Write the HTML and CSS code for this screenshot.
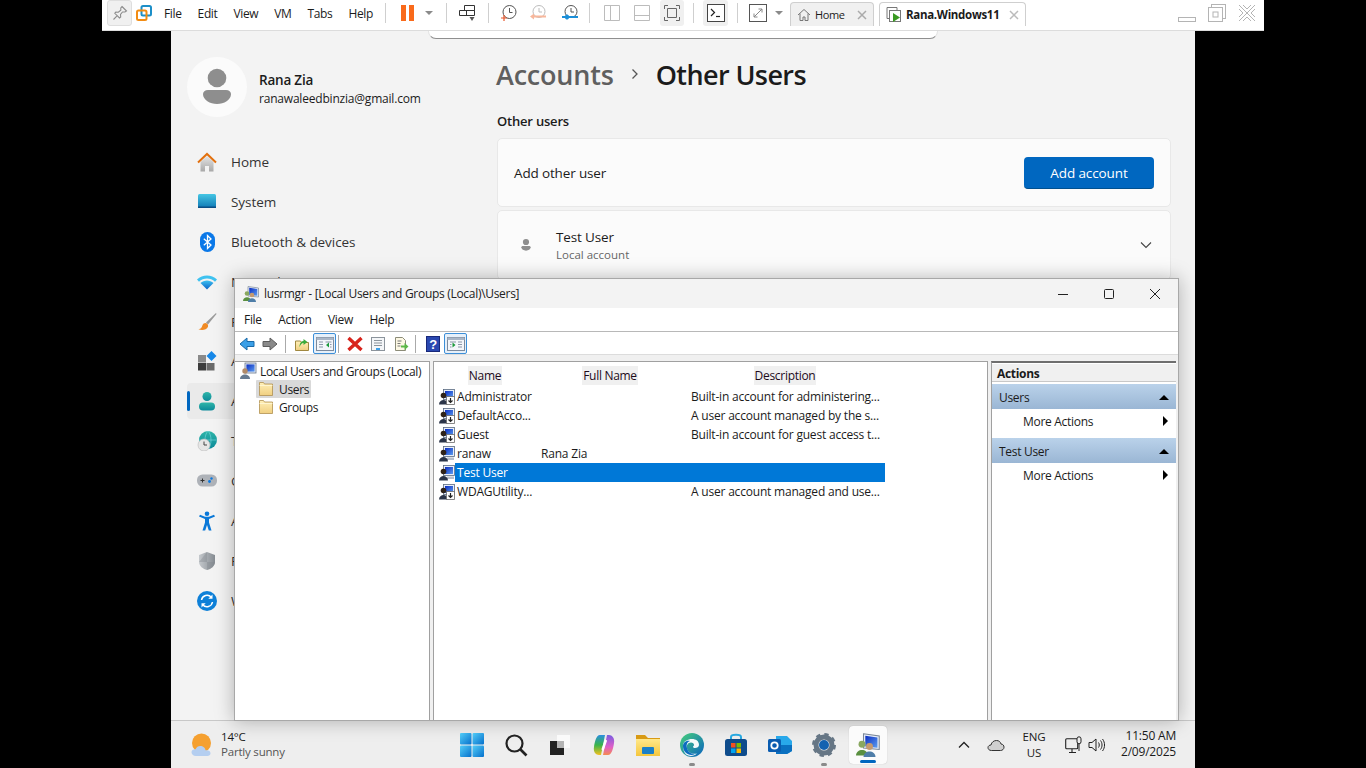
FILE: index.html
```html
<!DOCTYPE html>
<html lang="en">
<head>
    <meta charset="UTF-8">
    <meta name="viewport" content="width=device-width, initial-scale=1.0">
    <title>Rana.Windows11</title>
    <link rel="stylesheet" href="styles.css">
</head>
<body>
    <svg class="defs" aria-hidden="true">
        <defs>
            <linearGradient id="g-house" x1="0" y1="0" x2="0" y2="1"><stop offset="0" stop-color="#e4e4e4"/><stop offset="1" stop-color="#a8a8a8"/></linearGradient>
            <linearGradient id="g-screen" x1="0" y1="0" x2="0" y2="1"><stop offset="0" stop-color="#45c6e4"/><stop offset="1" stop-color="#0f78b4"/></linearGradient>
            <linearGradient id="g-wifi" x1="0" y1="0" x2="0" y2="1"><stop offset="0" stop-color="#3fc2f0"/><stop offset="1" stop-color="#0a62c8"/></linearGradient>
            <linearGradient id="g-teal" x1="0" y1="0" x2="0" y2="1"><stop offset="0" stop-color="#2fb5a8"/><stop offset="1" stop-color="#0b8a9a"/></linearGradient>
            <linearGradient id="g-shield" x1="0" y1="0" x2="1" y2="0"><stop offset="0" stop-color="#c4c8cc"/><stop offset="1" stop-color="#868c92"/></linearGradient>
            <linearGradient id="g-start" x1="0" y1="0" x2="1" y2="1"><stop offset="0" stop-color="#52cdf8"/><stop offset="1" stop-color="#0670cc"/></linearGradient>
            <linearGradient id="g-folder" x1="0" y1="0" x2="0" y2="1"><stop offset="0" stop-color="#ffe88a"/><stop offset="1" stop-color="#f5c63c"/></linearGradient>
            <linearGradient id="g-tree" x1="0" y1="0" x2="0" y2="1"><stop offset="0" stop-color="#fff0b8"/><stop offset="1" stop-color="#f0cf80"/></linearGradient>
            <linearGradient id="g-edge" x1="0" y1="0" x2="1" y2="1"><stop offset="0" stop-color="#46d07a"/><stop offset="1" stop-color="#0a62c0"/></linearGradient>
            <linearGradient id="g-copl" x1="0" y1="0" x2="0" y2="1"><stop offset="0" stop-color="#2a8ee0"/><stop offset=".5" stop-color="#38b44a"/><stop offset="1" stop-color="#f5c020"/></linearGradient>
            <linearGradient id="g-copr" x1="0" y1="0" x2="0" y2="1"><stop offset="0" stop-color="#7a5ce0"/><stop offset=".6" stop-color="#e060c8"/><stop offset="1" stop-color="#f58a50"/></linearGradient>
            <linearGradient id="g-mon" x1="0" y1="0" x2="1" y2="1"><stop offset="0" stop-color="#0a2cc0"/><stop offset="1" stop-color="#5c9cf0"/></linearGradient>

            <symbol id="i-home" viewBox="0 0 20 20"><path d="M3.500 10 10 4l6.500 6v9.500H12V14H8v5.500H3.500z" fill="url(#g-house)"/><path d="M1 10.500 10 2l9 8.500" fill="none" stroke="#e2700e" stroke-width="2"/></symbol>
            <symbol id="i-system" viewBox="0 0 20 20"><rect x="1" y="2" width="18" height="14" rx="1.500" fill="url(#g-screen)"/><rect x="1" y="14.500" width="18" height="1.500" fill="#0b4f86"/></symbol>
            <symbol id="i-bt" viewBox="0 0 20 20"><rect x="3" y="0" width="15" height="20" rx="7.500" fill="#0a78e8"/><path d="M6.800 6.800 14 13l-3.500 3.500v-13L14 7l-7.200 6.200" fill="none" stroke="#fff" stroke-width="1.300"/></symbol>
            <symbol id="i-wifi" viewBox="0 0 20 20"><path d="M0 7.500C5.500 2 14.500 2 20 7.500l-2 2.200C13.500 5.300 6.500 5.300 2 9.700z" fill="#3fc2f0"/><path d="M3.500 11C7 7.500 13 7.500 16.500 11L10 17.500z" fill="url(#g-wifi)"/></symbol>
            <symbol id="i-brush" viewBox="0 0 20 20"><path d="M19 1 9 10.500l2 2L19.500 2z" fill="#9a9a9a"/><path d="M8.500 11c-3 0-3 3-4 4.500-.7 1-2 1.500-3 1.800 3 1.500 8 1 9.500-2.500.5-1.500-.5-3.800-2.500-3.800z" fill="#f08a24"/></symbol>
            <symbol id="i-apps" viewBox="0 0 20 20"><rect x="1" y="4" width="8" height="7.500" fill="#8a8a8a"/><rect x="1" y="12" width="8" height="7.500" fill="#3c3c3c"/><rect x="9.500" y="12" width="8" height="7.500" fill="#6a6a6a"/><path d="m14.500 0 5 5-5 5-5-5z" fill="#1788e8"/></symbol>
            <symbol id="i-person" viewBox="0 0 20 20"><circle cx="10" cy="5.500" r="4.500" fill="url(#g-teal)"/><rect x="2" y="11.500" width="16" height="8" rx="4" fill="url(#g-teal)"/></symbol>
            <symbol id="i-time" viewBox="0 0 20 20"><circle cx="11" cy="9" r="9" fill="url(#g-teal)"/><path d="M2 9h18M11 0c-4 4-4 14 0 18M11 0c4 4 4 14 0 18" stroke="#7cd8e0" stroke-width=".6" fill="none"/><circle cx="7" cy="14" r="6" fill="#e6e6e6" stroke="#b8b8b8" stroke-width=".6"/><path d="M7 10.500V14h3" fill="none" stroke="#444" stroke-width="1"/></symbol>
            <symbol id="i-game" viewBox="0 0 20 20"><rect x="0" y="3.500" width="20" height="12" rx="5.500" fill="#aeb2b8"/><path d="M3.500 9.500h4M5.500 7.500v4" stroke="#333" stroke-width="1"/><circle cx="14.500" cy="7.500" r="1.200" fill="#0a78e0"/><circle cx="12.500" cy="10.500" r="1.400" fill="#0a78e0"/></symbol>
            <symbol id="i-access" viewBox="0 0 20 20"><circle cx="10" cy="2.800" r="2.300" fill="#0a78d8"/><path d="M2 5.500 8 8v3.500L5.500 19.500h2.700L10 14l1.800 5.500h2.700L12 11.500V8l6-2.500-1-1.800-5 2h-4l-5-2z" fill="#0a78d8"/></symbol>
            <symbol id="i-shield" viewBox="0 0 20 20"><path d="M10 1 2 4v7c0 4 4 7 8 8 4-1 8-4 8-8V4z" fill="url(#g-shield)"/><path d="M10 1v18c4-1 8-4 8-8H2v0" fill="#7d848a" opacity=".35"/></symbol>
            <symbol id="i-update" viewBox="0 0 20 20"><circle cx="10" cy="10" r="10" fill="#0e80d8"/><path d="M4.500 9A5.600 5.600 0 0 1 14.300 6.300M15.500 11A5.600 5.600 0 0 1 5.700 13.700" fill="none" stroke="#fff" stroke-width="1.500"/><path d="M15.500 3.500v4.200h-4.200zM4.500 16.500v-4.200h4.200z" fill="#fff"/></symbol>
            <symbol id="i-avatar" viewBox="0 0 60 60"><circle cx="30" cy="21" r="9.300" fill="#8e8e8e"/><path d="M21 33h18c3 0 5 2 5 4 0 6-7 10-14 10s-14-4-14-10c0-2 2-4 5-4z" fill="#8e8e8e"/></symbol>

            <symbol id="i-mmc" viewBox="0 0 16 16"><path d="M5 .5 15.500 2v9L5 10z" fill="#e6edf8" stroke="#7a8798" stroke-width=".7"/><path d="M6.200 1.800 14.300 3v6.800L6.200 9z" fill="url(#g-mon)"/><circle cx="4" cy="7.500" r="2.300" fill="#8aa860"/><path d="M0 15c0-5 8-5 8 0z" fill="#5a9040"/><circle cx="9" cy="9" r="2.300" fill="#c49a70"/><path d="M5 16c0-5 8-5 8 0z" fill="#4f7ea8"/></symbol>
            <symbol id="i-root" viewBox="0 0 18 18"><rect x="6" y="1" width="11" height="10" fill="#e6edf8" stroke="#66758a" stroke-width=".8"/><rect x="7.400" y="2.400" width="8.200" height="7.200" fill="url(#g-mon)"/><circle cx="6" cy="9" r="2.700" fill="#b08a68"/><path d="M1 17c0-6 10-6 10 0z" fill="#667a90"/></symbol>
            <symbol id="i-user" viewBox="0 0 16 16"><rect x="4.500" y="0.500" width="11" height="10" fill="#e8eef8" stroke="#5a6a80" stroke-width=".8"/><rect x="6" y="2" width="8" height="7" fill="url(#g-mon)"/><rect x="8" y="11.500" width="7" height="2.500" fill="#b8c0cc"/><circle cx="4.500" cy="6.500" r="2.800" fill="#2e2218"/><path d="M0 15.500c0-6 9-6 9 0z" fill="#2a3448"/></symbol>
            <symbol id="i-user-off" viewBox="0 0 16 16"><use href="#i-user"/><rect x="7.500" y="7.500" width="8" height="8" fill="#fff" stroke="#6a6a6a" stroke-width=".8"/><path d="M11.500 9v3.500M9.500 11.500l2 2 2-2" fill="none" stroke="#222" stroke-width="1.200"/></symbol>
            <symbol id="i-folder" viewBox="0 0 16 16"><path d="M1.500 1.500h4l1 1.500h8v11.500h-13z" fill="url(#g-tree)" stroke="#b09050" stroke-width=".8"/><path d="M1.500 4.500h13" stroke="#fff8d8" stroke-width=".8"/></symbol>
            <symbol id="i-pane-l" viewBox="0 0 22 20"><rect x="2.500" y="3.500" width="17" height="13" fill="#f4f6fa" stroke="#7c8a9c"/><rect x="2.500" y="3.500" width="17" height="2.500" fill="#aab6c6"/><path d="M5 8h4M5 10.500h4M5 13h4" stroke="#8a96a8"/><path d="M11.500 8h6M16 10.500h1.500M16 13h1.500" stroke="#8a96a8"/><path d="m15 8.500-3 2.500 3 2.500z" fill="#1c9a3c"/></symbol>
            <symbol id="i-pane-r" viewBox="0 0 22 20"><rect x="2.500" y="3.500" width="17" height="13" fill="#f4f6fa" stroke="#7c8a9c"/><rect x="2.500" y="3.500" width="17" height="2.500" fill="#aab6c6"/><path d="M13 8h4M13 10.500h4M13 13h4" stroke="#8a96a8"/><path d="M5 8h6M5 10.500h1.500M5 13h1.500" stroke="#8a96a8"/><path d="m7.500 8.500 3 2.500-3 2.500z" fill="#1c9a3c"/></symbol>
        </defs>
    </svg>

    <!-- barra de VMware -->
    <header class="vm-bar">
        <button class="vm-pin">
            <svg class="i16" viewBox="0 0 16 16"><path d="M10 1.500 14.500 6 13 7l-2.500 0-2 2.500.2 2.500-1.200 1L2.800 8.300l1-1.200 2.500.2 2.500-2V3z" fill="none" stroke="#8c8c8c" stroke-width="1.100"/><path d="M4.800 11.200 1.500 14.500" stroke="#8c8c8c" stroke-width="1.100"/></svg>
        </button>
        <svg class="i16 vm-logo" viewBox="0 0 16 16"><rect x="5.500" y="1" width="9.500" height="9.500" rx="1.500" fill="none" stroke="#1c8fc8" stroke-width="2"/><rect x="1" y="5.500" width="9.500" height="9.500" rx="1.500" fill="none" stroke="#f28c13" stroke-width="2"/></svg>
        <nav class="vm-menu"><span>File</span><span>Edit</span><span>View</span><span>VM</span><span>Tabs</span><span>Help</span></nav>
        <i class="vm-sep vm-sep-a"></i>
        <span class="vm-pause"><b></b><b></b></span>
        <i class="vm-caret vm-caret-a"></i>
        <i class="vm-sep vm-sep-b"></i>
        <svg class="i18 vm-keys" viewBox="0 0 18 18"><path d="M6.500 1.500h10v5h-10zM1.500 6.500h15v5h-15zM8.500 6.500v5" fill="#fff" stroke="#333"/><path d="m11.500 13 2.500 4 2.500-4z" fill="#555"/></svg>
        <i class="vm-sep vm-sep-b"></i>
        <svg class="i18 vm-snap-a" viewBox="0 0 18 18"><circle cx="9.500" cy="8" r="6.500" fill="none" stroke="#555"/><path d="M9.500 4v4.500h3" fill="none" stroke="#555"/><path d="M1 14h6M4 11v6" stroke="#e8562a" stroke-width="1.200"/></svg>
        <svg class="i18 vm-snap-b" viewBox="0 0 18 18"><circle cx="10" cy="7.500" r="6" fill="none" stroke="#bdbdbd"/><path d="M10 4v4h3" fill="none" stroke="#bdbdbd"/><path d="M5 11.500H17v2H5v2l-4-3 4-3z" fill="#f8b79c"/></svg>
        <svg class="i18 vm-snap-c" viewBox="0 0 18 18"><circle cx="10" cy="7.500" r="6" fill="none" stroke="#555"/><path d="M10 4v4h3" fill="none" stroke="#555"/><path d="M1 12h3c1-2 3-2 4 0h9v2H8c-1 2-3 2-4 0H1z" fill="#1c8fd8"/></svg>
        <i class="vm-sep vm-sep-c"></i>
        <svg class="i16 vm-lay-a" viewBox="0 0 16 16"><path d="M.5.500h15v15H.5zM6.500.500v15" fill="none" stroke="#bcbcbc"/></svg>
        <svg class="i16 vm-lay-b" viewBox="0 0 16 16"><path d="M.5.500h15v15H.5zM.5 10.500h15" fill="none" stroke="#bcbcbc"/></svg>
        <span class="vm-btn vm-full"><svg class="i16" viewBox="0 0 16 16"><path d="M3.500 3.500h9v9h-9z" fill="none" stroke="#666"/><path d="M.5 4V.500H4M12 .500h3.500V4M.5 12v3.500H4M12 15.500h3.500V12" fill="none" stroke="#666"/></svg></span>
        <i class="vm-sep vm-sep-d"></i>
        <span class="vm-btn vm-term"><svg class="i18" viewBox="0 0 18 18"><rect x=".5" y=".5" width="17" height="17" fill="#fff" stroke="#444"/><path d="m4 5 3.500 3.500L4 12" fill="none" stroke="#222" stroke-width="1.200"/><path d="M9 12.500h4" stroke="#222" stroke-width="1.200"/></svg></span>
        <i class="vm-sep vm-sep-d"></i>
        <svg class="i18 vm-expand" viewBox="0 0 18 18"><rect x=".5" y=".5" width="17" height="17" fill="#fff" stroke="#555"/><path d="m5 13 8-8M9.500 5H13v3.500M5 9.500V13h3.500" fill="none" stroke="#888"/></svg>
        <i class="vm-caret vm-caret-b"></i>
        <div class="vm-tab vm-tab-home">
            <svg class="i14" viewBox="0 0 14 14"><path d="M1 7 7 1.500 13 7M3 5.500v7h3V9h2v3.500h3v-7" fill="none" stroke="#777"/></svg>
            <span>Home</span>
            <svg class="i10 vm-x" viewBox="0 0 10 10"><path d="m1 1 8 8M9 1 1 9" stroke="#aaa" stroke-width="1.500"/></svg>
        </div>
        <div class="vm-tab vm-tab-on">
            <svg class="i16" viewBox="0 0 16 16"><path d="M1 .5h10v3M1 .5v11h3" fill="none" stroke="#777"/><rect x="3.500" y="3.500" width="11" height="11" fill="#fff" stroke="#777"/><path d="m7 6 7 4.500L7 15z" fill="#3a9a22"/></svg>
            <span>Rana.Windows11</span>
            <svg class="i10 vm-x" viewBox="0 0 10 10"><path d="m1 1 8 8M9 1 1 9" stroke="#bbb" stroke-width="1.500"/></svg>
        </div>
        <div class="vm-winbtns">
            <svg class="i18" viewBox="0 0 18 18"><rect x=".5" y="13.500" width="17" height="4" fill="#fff" stroke="#b4b4b4"/></svg>
            <svg class="i18" viewBox="0 0 18 18"><rect x="3.500" y=".5" width="14" height="14" fill="#fff" stroke="#b4b4b4"/><rect x=".5" y="3.500" width="14" height="14" fill="#fff" stroke="#b4b4b4"/><rect x="5" y="8" width="5" height="5" fill="none" stroke="#b4b4b4"/></svg>
            <svg class="i18" viewBox="0 0 18 18"><path d="m1 1 16 16M17 1 1 17M1 5l4 4-4 4M17 5l-4 4 4 4M5 1l4 4 4-4M5 17l4-4 4 4" fill="none" stroke="#b4b4b4"/></svg>
        </div>
    </header>

    <main class="desktop">
        <div class="settings">
            <div class="search-edge"></div>
            <aside class="sidebar">
                <div class="profile">
                    <div class="avatar"><svg class="i60"><use href="#i-avatar"/></svg></div>
                    <div class="profile-text">
                        <div class="profile-name">Rana Zia</div>
                        <div class="profile-mail">ranawaleedbinzia@gmail.com</div>
                    </div>
                </div>
                <!-- the lusrmgr window covers these labels, only the first letter edge shows -->
                <ul class="nav">
                    <li><svg class="i20"><use href="#i-home"/></svg>Home</li>
                    <li><svg class="i20"><use href="#i-system"/></svg>System</li>
                    <li><svg class="i20"><use href="#i-bt"/></svg>Bluetooth &amp; devices</li>
                    <li><svg class="i20"><use href="#i-wifi"/></svg>Network &amp; internet</li>
                    <li><svg class="i20"><use href="#i-brush"/></svg>P</li>
                    <li><svg class="i20"><use href="#i-apps"/></svg>A</li>
                    <li class="active"><svg class="i20"><use href="#i-person"/></svg>A</li>
                    <li><svg class="i20"><use href="#i-time"/></svg>T</li>
                    <li><svg class="i20"><use href="#i-game"/></svg>G</li>
                    <li><svg class="i20"><use href="#i-access"/></svg>A</li>
                    <li><svg class="i20"><use href="#i-shield"/></svg>P</li>
                    <li><svg class="i20"><use href="#i-update"/></svg>W</li>
                </ul>
            </aside>
            <section class="content">
                <h1 class="crumb"><span class="crumb-up">Accounts</span>
                    <svg class="crumb-chev" viewBox="0 0 10 12"><path d="m2.500 1.500 4.500 4.500-4.500 4.500" fill="none" stroke="#555" stroke-width="1.300"/></svg>
                    <span>Other Users</span></h1>
                <h2 class="sub">Other users</h2>
                <div class="card card-add">
                    <span>Add other user</span>
                    <button class="btn-add">Add account</button>
                </div>
                <div class="card card-user">
                    <svg class="i20"><use href="#i-avatar"/></svg>
                    <div class="card-text">
                        <div>Test User</div>
                        <small>Local account</small>
                    </div>
                    <svg class="card-chev" viewBox="0 0 12 8"><path d="m1 1.500 5 5 5-5" fill="none" stroke="#444" stroke-width="1.100"/></svg>
                </div>
            </section>
        </div>

        <!-- ventana lusrmgr -->
        <div class="mmc">
            <div class="mmc-title">
                <svg class="i16"><use href="#i-mmc"/></svg>
                <span class="mmc-name">lusrmgr - [Local Users and Groups (Local)\Users]</span>
                <div class="mmc-btns">
                    <span><svg class="i12" viewBox="0 0 12 12"><path d="M1 6.500h10" stroke="#222"/></svg></span>
                    <span><svg class="i12" viewBox="0 0 12 12"><rect x="1.500" y="1.500" width="9" height="9" rx="1" fill="none" stroke="#222"/></svg></span>
                    <span><svg class="i12" viewBox="0 0 12 12"><path d="m1 1 10 10M11 1 1 11" stroke="#222"/></svg></span>
                </div>
            </div>
            <div class="mmc-menu"><span>File</span><span>Action</span><span>View</span><span>Help</span></div>
            <div class="mmc-tools">
                <svg class="i16 t-back" viewBox="0 0 16 16"><path d="M8 2 1 8l7 6v-3.500h7v-5H8z" fill="#3ba0e8" stroke="#1a6aa8"/></svg>
                <svg class="i16 t-fwd" viewBox="0 0 16 16"><path d="m8 2 7 6-7 6v-3.500H1v-5h7z" fill="#8a8a8a" stroke="#5c5c5c"/></svg>
                <i class="t-sep t-sep-a"></i>
                <svg class="i16 t-up" viewBox="0 0 16 16"><path d="M1.500 5h5l1 1.500h7v8h-13z" fill="url(#g-tree)" stroke="#a08840"/><path d="M5.500 11c0-4 2-6 4-6V3l4 3-4 3V7c-2 0-3 2-4 4z" fill="#3cab3c"/></svg>
                <span class="t-btn t-pane-a"><svg class="t-ico"><use href="#i-pane-l"/></svg></span>
                <i class="t-sep t-sep-b"></i>
                <svg class="i16 t-del" viewBox="0 0 16 16"><path d="m1.500 2 13 12M14.500 2l-13 12" stroke="#d8241c" stroke-width="3.400"/></svg>
                <svg class="i16 t-prop" viewBox="0 0 16 16"><rect x="1.500" y="1.500" width="13" height="13" fill="#f4f6f8" stroke="#8c949c"/><path d="M4 4.500h8M4 7h8M4 9.500h8" stroke="#8c949c"/><path d="M6 13h4" stroke="#3ba0e8" stroke-width="2"/></svg>
                <svg class="i16 t-exp" viewBox="0 0 16 16"><path d="M2.500 1.500h7l3 3v10h-10z" fill="#fdf8e4" stroke="#8c8c78"/><path d="M4.500 5h4M4.500 7.500h3M4.500 10h3" stroke="#777"/><path d="M8 9.500h3.500V7l4 3.500-4 3.500v-2.500H8z" fill="#5cb848"/></svg>
                <i class="t-sep t-sep-c"></i>
                <svg class="i16 t-help" viewBox="0 0 16 16"><rect x="1.500" y=".5" width="13" height="15" fill="#2a48b0" stroke="#18287a"/><text x="8" y="12.500" text-anchor="middle" class="t-q">?</text></svg>
                <span class="t-btn t-pane-b"><svg class="t-ico"><use href="#i-pane-r"/></svg></span>
            </div>
            <div class="mmc-body">
                <div class="tree">
                    <div class="tree-root"><svg class="i18"><use href="#i-root"/></svg><span>Local Users and Groups (Local)</span></div>
                    <div class="tree-node tree-sel"><svg class="i16"><use href="#i-folder"/></svg><span>Users</span></div>
                    <div class="tree-node"><svg class="i16"><use href="#i-folder"/></svg><span>Groups</span></div>
                </div>
                <div class="list">
                    <div class="list-head">
                        <div class="lh-name"><span>Name</span></div>
                        <div class="lh-full"><span>Full Name</span></div>
                        <div class="lh-desc"><span>Description</span></div>
                    </div>
                    <div class="row"><svg class="i16"><use href="#i-user-off"/></svg><div>Administrator</div><div></div><div>Built-in account for administering...</div></div>
                    <div class="row"><svg class="i16"><use href="#i-user-off"/></svg><div>DefaultAcco...</div><div></div><div>A user account managed by the s...</div></div>
                    <div class="row"><svg class="i16"><use href="#i-user-off"/></svg><div>Guest</div><div></div><div>Built-in account for guest access t...</div></div>
                    <div class="row"><svg class="i16"><use href="#i-user"/></svg><div>ranaw</div><div>Rana Zia</div><div></div></div>
                    <div class="row row-sel"><svg class="i16"><use href="#i-user"/></svg><div>Test User</div><div></div><div></div></div>
                    <div class="row"><svg class="i16"><use href="#i-user-off"/></svg><div>WDAGUtility...</div><div></div><div>A user account managed and use...</div></div>
                </div>
                <div class="actions">
                    <div class="act-title">Actions</div>
                    <div class="act-head"><span>Users</span><i class="tri-up"></i></div>
                    <div class="act-item"><span>More Actions</span><i class="tri-right"></i></div>
                    <div class="act-head"><span>Test User</span><i class="tri-up"></i></div>
                    <div class="act-item"><span>More Actions</span><i class="tri-right"></i></div>
                </div>
            </div>
        </div>

        <footer class="taskbar">
            <div class="weather">
                <svg class="i24" viewBox="0 0 24 24"><circle cx="10.500" cy="10" r="9.500" fill="#f5a030"/><path d="M5 23c-3 0-4.500-2-4.500-3.800C.5 17 2.500 16 4.500 16.300 5.500 13.500 8 12.500 10.500 13c2.500.5 4 2.500 4 4.300 2.500-.5 5 .5 5 3 0 1.700-1.500 2.700-3 2.700z" fill="#b4cef0"/></svg>
                <div>
                    <div class="temp">14°C</div>
                    <div class="sky">Partly sunny</div>
                </div>
            </div>
            <div class="apps">
                <span class="app"><svg class="i24" viewBox="0 0 24 24"><rect x="0" y="0" width="11.500" height="11.500" rx="1" fill="url(#g-start)"/><rect x="12.500" y="0" width="11.500" height="11.500" rx="1" fill="url(#g-start)"/><rect x="0" y="12.500" width="11.500" height="11.500" rx="1" fill="url(#g-start)"/><rect x="12.500" y="12.500" width="11.500" height="11.500" rx="1" fill="url(#g-start)"/></svg></span>
                <span class="app"><svg class="i24" viewBox="0 0 24 24"><circle cx="10.500" cy="10.500" r="8" fill="none" stroke="#222" stroke-width="2.200"/><path d="m16.500 16.500 6 6" stroke="#222" stroke-width="2.600"/></svg></span>
                <span class="app"><svg class="i24" viewBox="0 0 24 24"><rect x="9" y="2" width="13" height="13" fill="#fafafa"/><rect x="2" y="8" width="14" height="14" fill="#222"/><rect x="9" y="8" width="7" height="7" fill="#b4b4b4"/></svg></span>
                <span class="app"><svg class="i24" viewBox="0 0 24 24"><path d="M8 2h5L9 22H7c-3 0-6-3-5-8 .5-4 2-12 6-12z" fill="url(#g-copl)"/><path d="M16 22h-5l4-20h2c3 0 6 3 5 8-.5 4-2 12-6 12z" fill="url(#g-copr)"/><path d="m14 7-3.500 10" stroke="#fff" stroke-width="2.400"/></svg></span>
                <span class="app"><svg class="i24" viewBox="0 0 24 24"><path d="M0 2h9l3 3H24v18H0z" fill="#d89a14"/><rect x="0" y="6" width="24" height="17" fill="url(#g-folder)"/><rect x="6" y="14" width="12" height="7" rx="1" fill="#1a80c8"/></svg></span>
                <span class="app app-open"><svg class="i24" viewBox="0 0 24 24"><circle cx="12" cy="12" r="12" fill="url(#g-edge)"/><path d="M3 13c0-5 5-7 9-7 4 0 7 2 7 6 0 2-2 3-4 3-1 0-2-.5-2-1.500 2-1 1-4-2-4-3 0-5 3-4 6 1 4 5 6 10 5-3 3-8 3-11 1-2-2-3-5-3-9z" fill="#fff" opacity=".95"/><path d="M3 13c0-3 3-6 7-5-3 1-4 4-3 7 1 4 4 6 8 6-5 3-12-1-12-8z" fill="#0c6cc0"/></svg></span>
                <span class="app"><svg class="i24" viewBox="0 0 24 24"><path d="M7 6V4c0-3 10-3 10 0v2" fill="none" stroke="#28a8e0" stroke-width="2"/><rect x="1" y="6" width="22" height="17" rx="2.500" fill="#0f4c8c"/><rect x="7" y="10" width="4.500" height="4.500" fill="#f25022"/><rect x="12.500" y="10" width="4.500" height="4.500" fill="#7fba00"/><rect x="7" y="15.500" width="4.500" height="4.500" fill="#00a4ef"/><rect x="12.500" y="15.500" width="4.500" height="4.500" fill="#ffb900"/></svg></span>
                <span class="app"><svg class="i24" viewBox="0 0 24 24"><path d="M8 3h11l5 5v10l-5 3H8z" fill="#28a8ea"/><path d="M8 12h16v6l-5 3H8z" fill="#0a70c0"/><rect x="0" y="6" width="13" height="13" rx="1.500" fill="#0a5cb0"/><circle cx="6.500" cy="12.500" r="3.200" fill="none" stroke="#fff" stroke-width="1.800"/></svg></span>
                <span class="app app-open"><svg class="i24" viewBox="0 0 24 24"><circle cx="12" cy="12" r="8" fill="none" stroke="#667685" stroke-width="5"/><circle cx="12" cy="12" r="10.500" fill="none" stroke="#667685" stroke-width="3" stroke-dasharray="4.200 4.050"/><circle cx="12" cy="12" r="5" fill="#1462b0"/></svg></span>
                <span class="app app-cur"><svg class="i24"><use href="#i-mmc"/></svg></span>
            </div>
            <div class="tray">
                <svg class="i12 tray-chev" viewBox="0 0 12 12"><path d="m1 8.500 5-5 5 5" fill="none" stroke="#222" stroke-width="1.300"/></svg>
                <svg class="tray-cloud" viewBox="0 0 18 14"><path d="M4.500 12.500C2 12.500 1 11 1 9.500 1 8 2.500 7 4 7 4.500 4 7 2.500 9.500 2.500 12 2.500 13.500 4 14 6c2 .2 3 1.500 3 3.200 0 1.800-1.500 3.300-3.500 3.300z" fill="#cfcfcf" stroke="#333" stroke-width="1"/></svg>
                <div class="tray-lang"><div>ENG</div><div>US</div></div>
                <svg class="i18 tray-net" viewBox="0 0 18 18"><rect x=".7" y="2.700" width="12" height="10" rx="1" fill="none" stroke="#222" stroke-width="1.100"/><path d="M4 16.500h7M7 13v3" stroke="#222" stroke-width="1.100"/><rect x="12" y=".8" width="4" height="7" rx="2" fill="#eee" stroke="#222"/><path d="M14 8v7" stroke="#222"/></svg>
                <svg class="i18 tray-vol" viewBox="0 0 18 18"><path d="M1 6.500h3l4-3.500v12l-4-3.500H1z" fill="none" stroke="#222"/><path d="M10.500 6.500c1 1.500 1 3.500 0 5M12.500 4.500c2 2.500 2 6.500 0 9M14.500 3c2.700 3.500 2.700 8.500 0 12" fill="none" stroke="#222"/></svg>
                <div class="tray-clock"><div>11:50 AM</div><div>2/09/2025</div></div>
            </div>
        </footer>
    </main>
</body>
</html>
```

FILE: styles.css
```css
* {
    box-sizing: border-box;
}
html, body {
    margin: 0;
    padding: 0;
    width: 1366px;
    height: 768px;
    overflow: hidden;
    background: #000;
    font-family: "Open Sans", "Noto Sans", sans-serif;
    color: #1b1b1b;
}
.defs {
    position: absolute;
    width: 0;
    height: 0;
}
svg {
    display: block;
    flex: none;
}
.i10 { width: 10px; height: 10px; }
.i12 { width: 12px; height: 12px; }
.i14 { width: 14px; height: 14px; }
.i16 { width: 16px; height: 16px; }
.i18 { width: 18px; height: 18px; }
.i20 { width: 20px; height: 20px; }
.i24 { width: 24px; height: 24px; }
.i60 { width: 60px; height: 60px; }

/* VMware toolbar */
.vm-bar {
    position: relative;
    z-index: 3;
    display: flex;
    align-items: center;
    width: 1162px;
    height: 31px;
    margin-left: 102px;
    padding: 0 0 4px 5px;
    background: #fff;
    border-bottom: 1px solid #dcdcdc;
    font-size: 12px;
    letter-spacing: -0.35px;
}
.vm-pin {
    display: flex;
    align-items: center;
    justify-content: center;
    width: 25px;
    height: 26px;
    padding: 0;
    background: #f0f0f0;
    border: 1px solid #dedede;
    border-radius: 3px;
}
.vm-logo { margin-left: 4px; }
.vm-menu {
    display: flex;
    justify-content: space-between;
    width: 209px;
    margin-left: 12px;
}
.vm-sep {
    width: 1px;
    height: 20px;
    background: #cfcfcf;
}
.vm-sep-a { margin-left: 12px; }
.vm-sep-b { margin-left: 12px; }
.vm-sep-c { margin-left: 10px; }
.vm-sep-d { margin-left: 9px; }
.vm-pause {
    display: flex;
    gap: 3px;
    margin-left: 15px;
}
.vm-pause b {
    width: 5px;
    height: 16px;
    background: #f96a1b;
}
.vm-caret {
    width: 0;
    height: 0;
    border-left: 4px solid transparent;
    border-right: 4px solid transparent;
    border-top: 4px solid #8a8a8a;
}
.vm-caret-a { margin-left: 11px; margin-right: 1px; }
.vm-caret-b { margin-left: 8px; }
.vm-keys { margin-left: 11px; }
.vm-snap-a { margin-left: 11px; }
.vm-snap-b { margin-left: 11px; }
.vm-snap-c { margin-left: 14px; }
.vm-lay-a { margin-left: 14px; }
.vm-lay-b { margin-left: 14px; }
.vm-btn {
    display: flex;
    align-items: center;
    justify-content: center;
    height: 26px;
    background: #f0f0f0;
    border-radius: 3px;
}
.vm-full { width: 24px; margin-left: 10px; }
.vm-term { width: 25px; margin-left: 9px; }
.vm-expand { margin-left: 11px; }
.vm-tab {
    display: flex;
    align-items: center;
    align-self: flex-start;
    height: 24px;
    margin-top: 2px;
    border: 1px solid #cfcfcf;
    border-bottom: none;
    border-radius: 4px 4px 0 0;
    padding: 0 6px;
}
.vm-tab-home {
    width: 84px;
    margin-left: 7px;
    gap: 4px;
    background: #f0f0f0;
    font-size: 11px;
}
.vm-tab-on {
    width: 147px;
    margin-left: 5px;
    gap: 4px;
    background: #fff;
    font-weight: 700;
    font-size: 11.500px;
    letter-spacing: -0.3px;
}
.vm-x { margin-left: auto; }
.vm-winbtns {
    display: flex;
    gap: 12px;
    margin-left: auto;
    margin-right: 8px;
}

/* VM screen */
.desktop {
    position: relative;
    display: flex;
    flex-direction: column;
    width: 1024px;
    height: 737px;
    margin-left: 171px;
}
.settings {
    position: relative;
    display: flex;
    height: 689px;
    background: #f3f3f3;
}
.search-edge {
    position: absolute;
    left: 257px;
    top: 0;
    width: 510px;
    height: 8px;
    background: #fff;
    border: 1px solid #e2e2e2;
    border-top: none;
    border-bottom-color: #8f8f8f;
    border-radius: 0 0 8px 8px;
}
.sidebar {
    width: 325px;
    flex: none;
    padding: 26px 0 0 16px;
}
.profile {
    display: flex;
    align-items: center;
    gap: 12px;
    height: 60px;
    margin-bottom: 27px;
}
.avatar {
    width: 60px;
    height: 60px;
    border-radius: 50%;
    background: #fbfbfb;
}
.profile-text {
    padding-top: 3px;
}
.profile-name {
    font-size: 13.500px;
    font-weight: 600;
    letter-spacing: -0.2px;
}
.profile-mail {
    margin-top: 1px;
    font-size: 12px;
    letter-spacing: -0.2px;
}
.nav {
    list-style: none;
    margin: 0;
    padding: 0;
}
.nav li {
    position: relative;
    display: flex;
    align-items: center;
    gap: 14px;
    height: 36px;
    margin-bottom: 3.900px;
    padding-left: 10px;
    border-radius: 4px;
    font-size: 13.500px;
    letter-spacing: -0.05px;
    color: #333;
}
.nav li.active {
    background: #eaeaea;
}
.nav li.active::before {
    content: "";
    position: absolute;
    left: 0;
    top: 8px;
    width: 3px;
    height: 20px;
    border-radius: 2px;
    background: #0067c0;
}
.content {
    flex: 1;
    padding: 24px 24px 0 0;
}
.crumb {
    display: flex;
    align-items: center;
    height: 38px;
    margin: 0;
    font-size: 27px;
    font-weight: 600;
    letter-spacing: -0.6px;
}
.crumb-up {
    color: #5f5f5f;
    letter-spacing: -0.2px;
}
.crumb-chev {
    width: 10px;
    height: 12px;
    margin: 0 16px;
}
.sub {
    margin: 19px 0 8px 1px;
    font-size: 13px;
    line-height: 18px;
    font-weight: 600;
    letter-spacing: -0.2px;
}
.card {
    display: flex;
    align-items: center;
    margin-left: 1px;
    background: #fbfbfb;
    border: 1px solid #e8e8e8;
    border-radius: 5px;
    font-size: 13.500px;
    letter-spacing: -0.15px;
}
.card-add {
    justify-content: space-between;
    height: 69px;
    padding: 0 16px;
}
.btn-add {
    width: 130px;
    height: 32px;
    padding: 0 0 1px;
    background: #0067c0;
    border: none;
    border-bottom: 1px solid #00508f;
    border-radius: 4px;
    color: #fff;
    font-family: inherit;
    font-size: 13.500px;
    letter-spacing: -0.1px;
    line-height: 32px;
}
.card-user {
    height: 70px;
    margin-top: 3px;
    padding: 0 18px;
    gap: 20px;
}
.card-text small {
    display: block;
    margin-top: 1px;
    font-size: 11.500px;
    letter-spacing: 0;
    color: #666;
}
.card-chev {
    width: 12px;
    height: 8px;
    margin-left: auto;
}

/* lusrmgr window */
.mmc {
    position: absolute;
    left: 63px;
    top: 247px;
    display: flex;
    flex-direction: column;
    width: 945px;
    height: 443px;
    background: #f0f0f0;
    border: 1px solid #a8a8a8;
    box-shadow: 0 0 18px rgba(0, 0, 0, 0.28);
    font-size: 12px;
    letter-spacing: -0.3px;
}
.mmc-title {
    display: flex;
    align-items: center;
    gap: 5px;
    height: 29px;
    padding-left: 8px;
    background: #f3f3f3;
}
.mmc-name { color: #222; }
.mmc-btns {
    display: flex;
    margin-left: auto;
}
.mmc-btns span {
    display: flex;
    align-items: center;
    justify-content: center;
    width: 46px;
    height: 29px;
}
.mmc-menu {
    display: flex;
    gap: 16.400px;
    height: 23px;
    align-items: center;
    padding-left: 9px;
    background: #fff;
    border-bottom: 1px solid #b8b8b8;
    box-sizing: content-box;
}
.mmc-tools {
    display: flex;
    align-items: center;
    height: 23px;
    padding: 1px 0 0 4px;
    background: #fff;
    border-bottom: 1px solid #dcdcdc;
}
.t-fwd { margin-left: 7px; }
.t-sep {
    width: 1px;
    height: 18px;
    background: #aaa;
}
.t-sep-a { margin-left: 7px; }
.t-sep-b { margin-left: 2px; }
.t-sep-c { margin-left: 6px; }
.t-up { margin-left: 8px; }
.t-btn {
    display: flex;
    align-items: center;
    justify-content: center;
    width: 23px;
    height: 21px;
    background: #e6f0fa;
    border: 1px solid #3d8fd8;
    border-radius: 2px;
}
.t-ico { width: 22px; height: 20px; }
.t-pane-a { margin-left: 3px; }
.t-pane-b { margin-left: 3px; }
.t-del { margin-left: 8px; }
.t-prop { margin-left: 7px; }
.t-exp { margin-left: 7px; }
.t-help { margin-left: 9px; }
.t-q {
    font-family: "Liberation Sans", sans-serif;
    font-weight: 700;
    font-size: 13px;
    fill: #fff;
}
.mmc-body {
    flex: 1;
    display: flex;
    gap: 3px;
    padding-top: 6px;
    min-height: 0;
}
.tree {
    width: 195px;
    background: #fff;
    border: 1px solid #a0a0a0;
    border-left: none;
    border-bottom: none;
    padding: 0 0 0 4px;
    letter-spacing: -0.36px;
}
.tree-root {
    display: flex;
    align-items: center;
    gap: 3px;
    height: 18px;
}
.tree-node {
    display: flex;
    align-items: center;
    gap: 5px;
    width: fit-content;
    height: 18px;
    margin-left: 17px;
    padding: 0 2px 0 2px;
    border-radius: 1px;
}
.tree-sel {
    background: #d9d9d9;
}
.list {
    width: 555px;
    background: #fff;
    border: 1px solid #a0a0a0;
    border-bottom: none;
    padding-left: 5px;
    letter-spacing: -0.2px;
}
.list-head, .row {
    display: grid;
    grid-template-columns: 16px 86px 150px 194px;
    align-items: center;
}
.list-head {
    grid-template-columns: 96px 8px 138px 12px 188px;
    height: 25px;
    margin-left: -2px;
    padding-top: 1px;
    letter-spacing: -0.3px;
}
.lh-name, .lh-full, .lh-desc {
    text-align: center;
    color: #1d0b1a;
}
.lh-name { grid-column: 1; }
.lh-full { grid-column: 3; }
.lh-desc { grid-column: 5; }
.list-head span {
    padding: 1px 1px;
    background: #f0f0f0;
}
.row {
    height: 19px;
}
.row > div {
    height: 19px;
    line-height: 19px;
    white-space: nowrap;
}
.row > div:nth-child(2) {
    padding-left: 2px;
}
.row-sel > div {
    background: #0078d7;
    color: #fff;
}
.actions {
    flex: 1;
    margin-right: 2px;
    background: #fff;
    border: 1px solid #a0a0a0;
    border-top: 2px solid #6e6e6e;
    border-bottom: none;
    border-right: none;
    padding-top: 1px;
}
.act-title {
    height: 18px;
    line-height: 19px;
    margin-bottom: 2px;
    padding-left: 5px;
    background: #f0f0f0;
    border-bottom: 1px solid #c8c8c8;
    font-weight: 700;
}
.act-head {
    display: flex;
    align-items: center;
    justify-content: space-between;
    height: 25px;
    padding: 2px 7px 0;
    background: linear-gradient(#bad2ea, #9ab6d4);
}
.act-item {
    display: flex;
    align-items: center;
    justify-content: space-between;
    height: 29px;
    padding: 0 8px 5px 31px;
}
.tri-up {
    width: 0;
    height: 0;
    border-left: 5px solid transparent;
    border-right: 5px solid transparent;
    border-bottom: 5px solid #000;
}
.tri-right {
    width: 0;
    height: 0;
    border-top: 5px solid transparent;
    border-bottom: 5px solid transparent;
    border-left: 5px solid #000;
}

/* taskbar */
.taskbar {
    display: flex;
    align-items: center;
    height: 48px;
    background: #eeeeee;
    border-top: 1px solid #c8c8c8;
    font-size: 11.500px;
    letter-spacing: -0.2px;
}
.weather {
    display: flex;
    align-items: center;
    gap: 6px;
    width: 279px;
    padding-left: 20px;
}
.temp { line-height: 15px; }
.sky {
    line-height: 16px;
    color: #555;
}
.apps {
    display: flex;
}
.app {
    position: relative;
    display: flex;
    align-items: center;
    justify-content: center;
    width: 44px;
    height: 38px;
}
.app-open::after, .app-cur::after {
    content: "";
    position: absolute;
    bottom: -2px;
    left: 19px;
    width: 6px;
    height: 3px;
    border-radius: 2px;
    background: #8a8a8a;
}
.app-cur {
    width: 38px;
    margin-left: 3px;
    background: #fbfbfb;
    border-radius: 4px;
    box-shadow: 0 0 1px rgba(0, 0, 0, 0.25);
}
.app-cur::after {
    bottom: 1px;
    left: 11px;
    width: 16px;
    background: #0067c0;
}
.tray {
    display: flex;
    align-items: center;
    margin-left: 71px;
}
.tray-cloud {
    width: 18px;
    height: 14px;
    margin-left: 17px;
}
.tray-lang {
    width: 40px;
    margin-left: 9px;
    text-align: center;
    line-height: 16px;
}
.tray-net { margin-left: 11px; }
.tray-vol { margin-left: 5px; }
.tray-clock {
    width: 70px;
    margin-top: -2px;
    text-align: right;
    font-size: 12px;
    line-height: 16px;
}
```
